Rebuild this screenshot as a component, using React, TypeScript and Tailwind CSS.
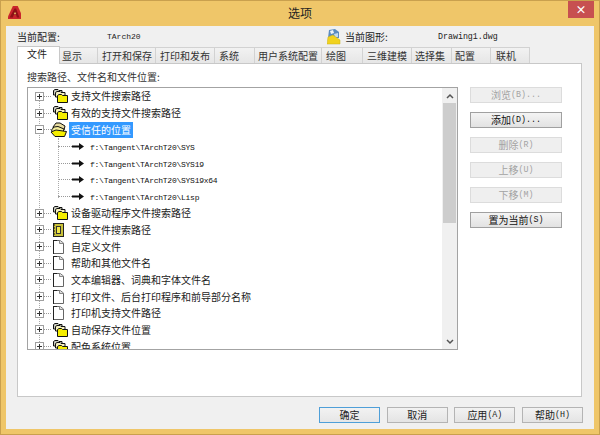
import React from "react";

const CJK = "font-['Noto_Sans_CJK_SC','Liberation_Sans',sans-serif]";
const MONO = "font-['Liberation_Mono','Noto_Sans_CJK_SC',monospace]";

const tabs = [
  ["文件", "w-[43px]", "pl-[9px]"],
  ["显示", "w-[38px]", "pl-[2px]"],
  ["打开和保存", "w-[58px]", "pl-[4px]"],
  ["打印和发布", "w-[59px]", "pl-[4px]"],
  ["系统", "w-[40px]", "pl-[4px]"],
  ["用户系统配置", "w-[67px]", "pl-[3px]"],
  ["绘图", "w-[41px]", "pl-[4px]"],
  ["三维建模", "w-[49px]", "pl-[4px]"],
  ["选择集", "w-[40px]", "pl-[3px]"],
  ["配置", "w-[39px]", "pl-[3px]"],
  ["联机", "w-[39px]", "pl-[5px]"],
];

function Logo() {
  return (
    <svg width="13" height="13" viewBox="0 0 16 16">
      <path d="M0 16 L0 13 L6 0 L12 0 L16 9 L16 16 Z" fill="#c9252c" />
      <path d="M2 14 L8 3 L10 3 L14 14 L11 14 L10 11 L7 11 L6 14 Z" fill="#8e1116" />
      <path d="M8 8 L9.4 8 L9.8 10 L7.4 10 Z" fill="#efc669" />
    </svg>
  );
}

function DrawingIcon() {
  return (
    <svg width="14" height="16" viewBox="0 0 14 16">
      <path d="M2 1 L8 0 L12 3 L12 9 L1 9 Z" fill="#5b8cc0" />
      <path d="M3 2 L6 1 L7 4 L4 5 Z" fill="#eef4fa" />
      <path d="M7 5 L11 4 L11 8 L8 8 Z" fill="#c3dbee" />
      <path d="M0 15 L1 8 L6 6 L13 11 L13 15 Z" fill="#f1d21e" stroke="#c9b11a" strokeWidth="0.5" />
    </svg>
  );
}

function Folders({ open }: { open?: boolean }) {
  if (open) {
    return (
      <svg width="18" height="16" viewBox="0 0 18 16" className="-ml-px">
        <path d="M3 5 L6 1 L10 1 L15 4 L14 8 L4 9 Z" fill="#e8dca0" stroke="#111" strokeWidth="1" />
        <path d="M1.5 8 L4 5 L8 4.5 L14 7 L13 10 L3 11 Z" fill="#f3ec9a" stroke="#111" strokeWidth="1" />
        <path d="M1 10 L6 8 L16.5 9.5 L14.5 14.5 L5 14.5 Z" fill="#f5ee00" stroke="#111" strokeWidth="1" />
      </svg>
    );
  }
  return (
    <svg width="18" height="16" viewBox="0 0 18 16">
      <path d="M2.5 7 V2.5 L4 1.5 H7 L8 2.5 H11 V7 Z" fill="#c9cbc0" stroke="#111" strokeWidth="1" />
      <path d="M4.5 9 V4.5 L6 3.5 H9 L10 4.5 H14 V9 Z" fill="#f4efc0" stroke="#111" strokeWidth="1" />
      <path d="M6.5 14.5 V7.5 L8 6.5 H10.5 L11.5 7.5 H16.5 V14.5 Z" fill="#f5ee00" stroke="#111" strokeWidth="1" />
    </svg>
  );
}

function Doc() {
  return (
    <svg width="18" height="16" viewBox="0 0 18 16">
      <path d="M2.5 1.5 H9 L12.5 4 V14.5 H2.5 Z" fill="#fff" stroke="#666" strokeWidth="1" />
      <path d="M2 1 H6 V2 H3 V15 H2 Z" fill="#222" />
      <path d="M8.5 1.5 V4.5 H12.5" fill="#ddd" stroke="#888" strokeWidth="1" />
    </svg>
  );
}

function ProjectDoc() {
  return (
    <svg width="18" height="16" viewBox="0 0 18 16">
      <rect x="2.5" y="1.5" width="10" height="13" fill="#c9c23a" stroke="#222" strokeWidth="1" />
      <rect x="5.5" y="4.5" width="4" height="7" fill="#f3e94a" stroke="#333" strokeWidth="1" />
      <path d="M2 3 H4 M2 6 H4 M2 9 H4 M2 12 H4" stroke="#111" strokeWidth="1" />
    </svg>
  );
}

function Arrow() {
  return (
    <svg width="12" height="9" viewBox="0 0 12 9">
      <path d="M0 3.5 H7 V1 L12 4.5 L7 8 V5.5 H0 Z" fill="#111" />
    </svg>
  );
}

function Expander({ open }: { open?: boolean }) {
  return (
    <span className="relative flex h-[9px] w-[9px] shrink-0 items-center justify-center border border-[#a0a0a0] bg-white">
      <span className="absolute h-px w-[5px] bg-[#333]" />
      {!open && <span className="absolute h-[5px] w-px bg-[#333]" />}
    </span>
  );
}

function Node({ icon, label, open, selected }: { icon: React.ReactNode; label: string; open?: boolean; selected?: boolean }) {
  return (
    <div className="flex h-[16.7px] shrink-0 items-center pl-[7px]">
      <Expander open={open} />
      <span className="h-0 w-[7px] shrink-0 border-t border-dotted border-[#999]" />
      <span className="flex w-[18px] shrink-0 items-center">{icon}</span>
      <span
        className={
          selected
            ? "flex h-[16px] items-center whitespace-nowrap bg-[#3399ff] px-[2px] text-[10px] leading-none text-white"
            : "ml-[2px] whitespace-nowrap text-[10px] leading-none text-[#222]"
        }
      >
        {label}
      </span>
    </div>
  );
}

function PathRow({ path }: { path: string }) {
  return (
    <div className="flex h-[16.7px] shrink-0 items-center pl-[30px]">
      <span className="h-0 w-[14px] shrink-0 border-t border-dotted border-[#999]" />
      <Arrow />
      <span className={`${MONO} ml-[6px] whitespace-nowrap pt-[3px] text-[8px] leading-none tracking-[-0.25px] text-[#111]`}>{path}</span>
    </div>
  );
}

function SideButton({ label, latin, enabled }: { label: string; latin: string; enabled?: boolean }) {
  return (
    <div
      className={
        enabled
          ? "flex h-[16px] w-[92px] items-center justify-center border border-[#a0a0a0] bg-gradient-to-b from-[#f4f4f4] to-[#e2e2e2] text-[10px] leading-none text-[#111]"
          : "flex h-[16px] w-[92px] items-center justify-center border border-[#dcdcdc] bg-[#efefef] text-[10px] leading-none text-[#a3a3a3]"
      }
    >
      {label}
      <span className={`${MONO} text-[8.3px] leading-none`}>{latin}</span>
    </div>
  );
}

function BottomButton({ label, latin, primary }: { label: string; latin?: string; primary?: boolean }) {
  return (
    <div
      className={
        primary
          ? "flex h-[16px] w-[61px] items-center justify-center border border-[#4f9fd8] bg-gradient-to-b from-[#f2f2f2] to-[#e6e6e6] text-[10px] leading-none text-[#222]"
          : "flex h-[16px] w-[61px] items-center justify-center border border-[#b4b4b4] bg-gradient-to-b from-[#f2f2f2] to-[#e4e4e4] text-[10px] leading-none text-[#222]"
      }
    >
      {label}
      {latin && <span className={`${MONO} text-[8.3px] leading-none`}>{latin}</span>}
    </div>
  );
}

export default function App() {
  return (
    <div className={`${CJK} flex h-[435px] w-[600px] flex-col border border-[#c9a04e] bg-[#efc669]`}>
      <div className="relative flex h-[25px] shrink-0 items-center justify-center pb-[2px] text-[12px] text-[#222]">
        <span className="absolute left-[7px] top-[5px]"><Logo /></span>
        <span>选项</span>
        <div className="absolute right-[5px] top-0 flex h-[17px] w-[26px] items-center justify-center bg-[#c75050] text-[11px] font-bold leading-none text-white">×</div>
      </div>
      <div className="mx-[5px] mb-[5px] flex min-h-0 flex-1 flex-col bg-[#f0f0f0] pl-[11px] pr-[12px]">
        <div className="flex h-[20px] shrink-0 items-center pt-[1px] text-[10px] leading-none text-[#222]">
          <span className="w-[90px]">当前配置:</span>
          <span className={`${MONO} w-[220px] pt-px text-[8px]`}>TArch20</span>
          <span className="flex w-[18px] items-center"><DrawingIcon /></span>
          <span className="w-[93px]">当前图形:</span>
          <span className={`${MONO} pt-px text-[8.3px]`}>Drawing1.dwg</span>
        </div>
        <div className="relative z-10 flex h-[17px] shrink-0 items-end">
          {tabs.map(([t, w, pad], i) =>
            i === 0 ? (
              <div key={t} className={`${w} ${pad} -mb-px flex h-[18px] items-start border border-b-0 border-[#c8c8c8] bg-white pt-[2px] text-[10px] leading-none text-[#222]`}>{t}</div>
            ) : (
              <div key={t} className={`${w} ${pad} flex h-[16px] items-center border border-b-0 border-l-0 border-[#d2d2d2] bg-gradient-to-b from-[#f2f2f2] to-[#e6e6e6] text-[10px] leading-none text-[#333]`}>{t}</div>
            )
          )}
        </div>
        <div className="flex h-[334px] shrink-0 border border-[#c8c8c8] bg-white pl-[9px]">
          <div className="flex w-[431px] shrink-0 flex-col">
            <div className="flex h-[23px] shrink-0 items-center pt-[3px] text-[10px] leading-none text-[#333]">搜索路径、文件名和文件位置:</div>
            <div className="relative flex h-[263px] shrink-0 overflow-hidden border border-[#a3a3a3] bg-white">
              <div className="relative flex min-w-0 flex-1 flex-col overflow-hidden">
                <span className="absolute left-[11px] top-[8px] h-[260px] border-l border-dotted border-[#aaa]" />
                <span className="absolute left-[30px] top-[50px] h-[60px] border-l border-dotted border-[#aaa]" />
                <Node icon={<Folders />} label="支持文件搜索路径" />
                <Node icon={<Folders />} label="有效的支持文件搜索路径" />
                <Node icon={<Folders open />} label="受信任的位置" open selected />
                <PathRow path="f:\Tangent\TArchT20\SYS" />
                <PathRow path="f:\Tangent\TArchT20\SYS19" />
                <PathRow path="f:\Tangent\TArchT20\SYS19x64" />
                <PathRow path="f:\Tangent\TArchT20\Lisp" />
                <Node icon={<Folders />} label="设备驱动程序文件搜索路径" />
                <Node icon={<ProjectDoc />} label="工程文件搜索路径" />
                <Node icon={<Doc />} label="自定义文件" />
                <Node icon={<Doc />} label="帮助和其他文件名" />
                <Node icon={<Doc />} label="文本编辑器、词典和字体文件名" />
                <Node icon={<Doc />} label="打印文件、后台打印程序和前导部分名称" />
                <Node icon={<Doc />} label="打印机支持文件路径" />
                <Node icon={<Folders />} label="自动保存文件位置" />
                <Node icon={<Folders />} label="配色系统位置" />
              </div>
              <div className="flex w-[15px] shrink-0 flex-col items-center bg-[#f0f0f0]">
                <div className="flex h-[15px] w-full items-center justify-center">
                  <svg width="8" height="6" viewBox="0 0 8 6"><path d="M1 5 L4 2 L7 5" fill="none" stroke="#555" strokeWidth="1.5" /></svg>
                </div>
                <div className="h-[120px] w-[13px] bg-[#cdcdcd]" />
                <div className="flex-1" />
                <div className="flex h-[15px] w-full items-center justify-center">
                  <svg width="8" height="6" viewBox="0 0 8 6"><path d="M1 1 L4 4 L7 1" fill="none" stroke="#555" strokeWidth="1.5" /></svg>
                </div>
              </div>
            </div>
          </div>
          <div className="ml-[12px] flex flex-col gap-[9px] pt-[23px]">
            <SideButton label="浏览" latin="(B)..." />
            <SideButton label="添加" latin="(D)..." enabled />
            <SideButton label="删除" latin="(R)" />
            <SideButton label="上移" latin="(U)" />
            <SideButton label="下移" latin="(M)" />
            <SideButton label="置为当前" latin="(S)" enabled />
          </div>
        </div>
        <div className="-mr-px flex flex-1 items-start justify-end gap-[6.67px] pt-[10px]">
          <BottomButton label="确定" primary />
          <BottomButton label="取消" />
          <BottomButton label="应用" latin="(A)" />
          <BottomButton label="帮助" latin="(H)" />
        </div>
      </div>
    </div>
  );
}
